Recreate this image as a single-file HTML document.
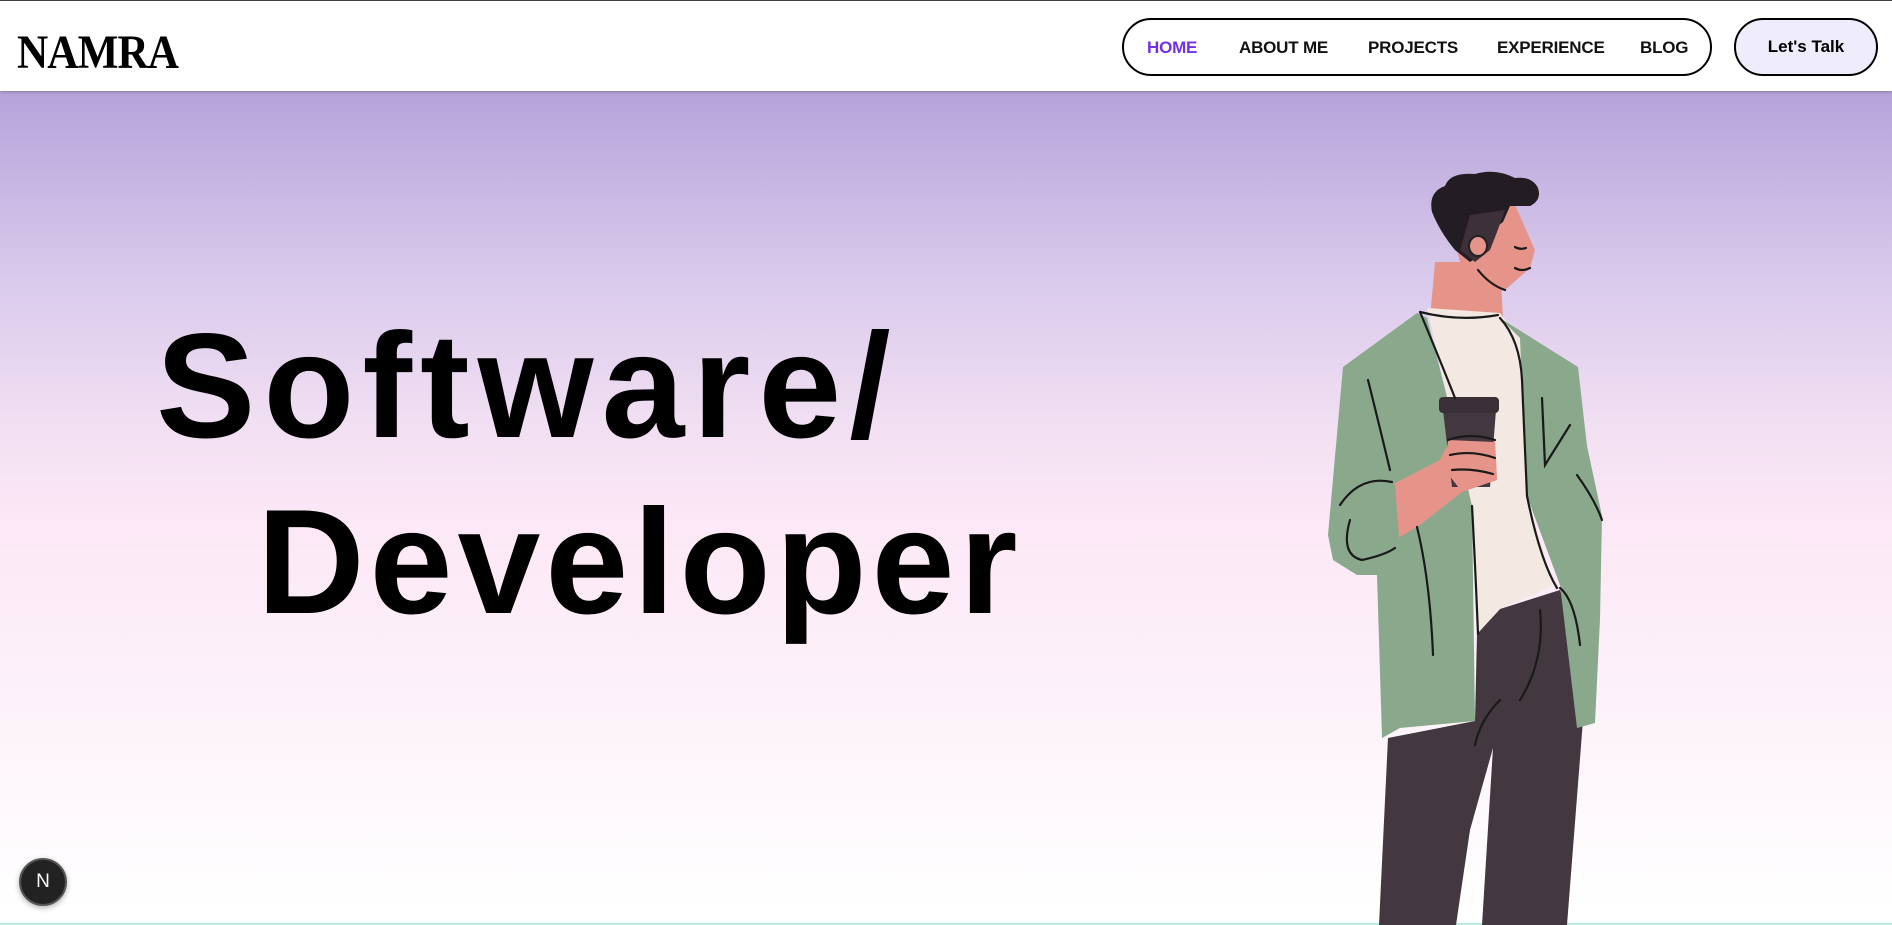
<!DOCTYPE html>
<html><head><meta charset="utf-8"><style>
html,body{margin:0;padding:0;width:1892px;height:925px;overflow:hidden;font-family:"Liberation Sans",sans-serif;}
.top{position:absolute;left:0;top:0;width:1892px;height:91px;background:#fff;border-top:1px solid #444;box-sizing:border-box;box-shadow:0 1px 3px rgba(0,0,0,.25);z-index:2}
.logo{position:absolute;left:17px;top:24px;font-family:"Liberation Serif",serif;font-weight:bold;font-size:48px;transform:scaleX(.9);transform-origin:left;letter-spacing:-1px;color:#000}
.nav{position:absolute;left:1122px;top:17px;width:590px;height:58px;border:2px solid #000;border-radius:30px;box-sizing:border-box}
.nav span{position:absolute;top:18px;font-size:17px;font-weight:bold;color:#111;letter-spacing:-.2px}
.btn{position:absolute;left:1734px;top:17px;width:144px;height:58px;border:2px solid #000;border-radius:30px;box-sizing:border-box;background:#efedfc;font-size:17px;font-weight:bold;text-align:center;line-height:54px}
.hero{position:absolute;left:0;top:91px;width:1892px;height:834px;background:linear-gradient(#b5a3da 0%,#d9c9ec 22%,#f1dff2 40%,#fce8f6 52%,#fdf3fa 75%,#fff 98%)}
.h1{position:absolute;font-weight:bold;font-size:149px;color:#000;line-height:1}
.badge{position:absolute;left:19px;top:858px;width:48px;height:48px;border-radius:50%;background:#222;border:2px solid #555;box-sizing:border-box;color:#fff;font-size:19px;text-align:center;line-height:44px;box-shadow:0 2px 6px rgba(0,0,0,.3)}
</style></head><body>
<div class="hero"></div>
<div style="position:absolute;left:0;top:923px;width:1892px;height:2px;background:#b8ece2"></div>
<div class="top">
<div class="logo">NAMRA</div>
<div class="nav">
<span style="left:23px;color:#7330e8">HOME</span>
<span style="left:115px">ABOUT ME</span>
<span style="left:244px">PROJECTS</span>
<span style="left:373px">EXPERIENCE</span>
<span style="left:516px">BLOG</span>
</div>
<div class="btn">Let's Talk</div>
</div>
<div class="h1" style="left:156px;top:311px;letter-spacing:8px">Software/</div>
<div class="h1" style="left:257px;top:487px;letter-spacing:5px">Developer</div>
<svg style="position:absolute;left:0;top:0" width="1892" height="925" viewBox="0 0 1892 925">
<g stroke-linejoin="round">
<path d="M1477,634 L1500,609 L1560,590 L1580,644 L1583,720 L1567,925 L1482,925 L1493,748 L1470,830 L1456,925 L1379,925 L1388,738 L1475,721 Z" fill="#433740"/>
<path d="M1435,262 L1500,262 L1503,318 L1430,318 Z" fill="#e6948a"/>
<path d="M1427,308 L1500,313 L1520,338 L1527,496 L1553,585 L1533,595 L1500,609 L1477,634 L1472,506 L1447,397 Z" fill="#f3e9e2"/>
<path d="M1417,313 L1343,367 L1328,535 L1333,560 L1357,575 L1377,575 L1382,738 L1400,728 L1475,721 L1472,506 L1447,397 L1427,318 Z" fill="#8aa88b"/>
<path d="M1500,318 L1578,367 L1587,446 L1602,516 L1600,619 L1595,723 L1577,728 L1560,585 L1527,496 L1520,338 Z" fill="#8aa88b"/>
<path d="M1465,205 L1515,205 L1535,250 L1530,268 L1505,290 L1480,282 L1460,262 L1452,230 Z" fill="#e6948a"/>
<path d="M1432,212 Q1428,192 1445,186 Q1450,172 1475,174 Q1495,168 1515,178 Q1532,176 1538,188 Q1542,200 1530,206 L1510,206 L1503,222 L1495,228 L1488,250 L1470,262 L1455,250 Q1440,232 1432,212 Z" fill="#231c22"/>
<path d="M1470,215 L1505,210 L1497,232 L1490,250 L1475,262 L1460,250 Z" fill="#3d3038"/>
<ellipse cx="1478" cy="246" rx="9" ry="10" fill="#e6948a" stroke="#222" stroke-width="2"/>
<path d="M1372,495 L1440,460 L1455,430 L1495,440 L1497,480 L1462,492 L1420,525 L1382,548 L1368,525 Z" fill="#e6948a"/>
<path d="M1443,410 L1496,410 L1490,487 L1452,487 Z" fill="#433740"/>
<rect x="1439" y="397" width="60" height="16" rx="4" fill="#3a2f36"/>
<path d="M1448,440 L1495,442 L1497,480 L1462,492 L1445,470 Z" fill="#e6948a"/>
<path d="M1335,505 Q1360,470 1395,485 L1400,550 Q1370,565 1345,555 Z" fill="#8aa88b"/>
</g>
<g fill="none" stroke="#1a1a1a" stroke-width="2.2" stroke-linecap="round">
<path d="M1420,312 Q1440,360 1455,398"/>
<path d="M1500,318 Q1520,340 1522,380 L1527,496 Q1540,560 1557,588"/>
<path d="M1478,634 Q1475,560 1472,506"/>
<path d="M1420,312 Q1460,322 1498,315"/>
<path d="M1368,380 Q1378,420 1390,470"/>
<path d="M1340,505 Q1360,475 1392,482"/>
<path d="M1350,520 Q1340,555 1362,560 Q1385,555 1395,548"/>
<path d="M1417,527 Q1430,580 1433,655"/>
<path d="M1542,398 L1545,465 L1570,425"/>
<path d="M1577,475 Q1595,500 1602,520"/>
<path d="M1560,588 Q1575,600 1580,645"/>
<path d="M1540,610 Q1545,660 1520,700"/>
<path d="M1500,700 Q1480,720 1475,745"/>
<path d="M1448,440 Q1470,432 1495,440 M1450,455 Q1472,450 1495,458 M1452,470 Q1472,468 1493,474"/>
<path d="M1478,270 Q1490,285 1505,290"/>
<path d="M1515,268 Q1522,272 1530,268"/>
<path d="M1515,247 Q1520,250 1526,248"/>
</g>
</svg>
<div class="badge">N</div>
</body></html>
